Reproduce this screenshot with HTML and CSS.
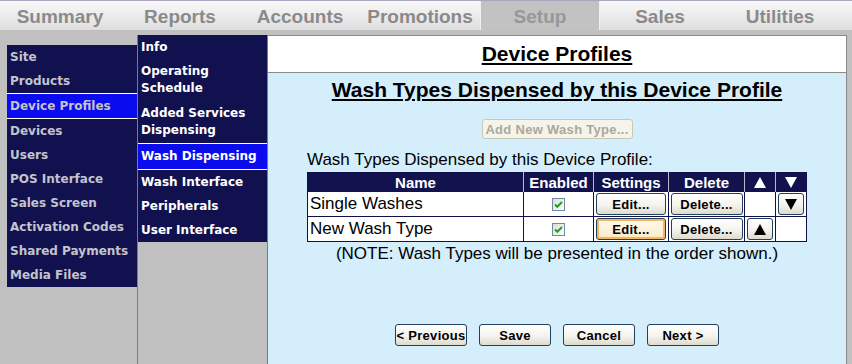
FILE: index.html
```html
<!DOCTYPE html>
<html lang="en">
<head>
    <meta charset="UTF-8">
    <title>Device Profiles - Setup</title>
    <link rel="stylesheet" href="styles.css">
</head>
<body>
    <div class="tabs">
        <div class="tab">Summary</div>
        <div class="tab">Reports</div>
        <div class="tab">Accounts</div>
        <div class="tab">Promotions</div>
        <div class="tab active">Setup</div>
        <div class="tab">Sales</div>
        <div class="tab">Utilities</div>
    </div>
    <div class="page">
        <div class="col-main">
            <ul class="nav nav-main">
                <li>Site</li>
                <li>Products</li>
                <li class="selected">Device Profiles</li>
                <li>Devices</li>
                <li>Users</li>
                <li>POS Interface</li>
                <li>Sales Screen</li>
                <li>Activation Codes</li>
                <li>Shared Payments</li>
                <li>Media Files</li>
            </ul>
        </div>
        <div class="col-sub">
            <ul class="nav nav-sub">
                <li>Info</li>
                <li class="two-line">Operating<br>Schedule</li>
                <li class="two-line">Added Services<br>Dispensing</li>
                <li class="selected">Wash Dispensing</li>
                <li>Wash Interface</li>
                <li>Peripherals</li>
                <li>User Interface</li>
            </ul>
        </div>
        <div class="content">
            <div class="content-head">
                <h1>Device Profiles</h1>
            </div>
            <div class="content-body">
                <h2>Wash Types Dispensed by this Device Profile</h2>
                <button class="xp add-btn" disabled>Add New Wash Type...</button>
                <div class="list">
                    <p class="list-label">Wash Types Dispensed by this Device Profile:</p>
                    <table>
                        <tr>
                            <th class="c-name">Name</th>
                            <th class="c-enabled">Enabled</th>
                            <th class="c-settings">Settings</th>
                            <th class="c-delete">Delete</th>
                            <th class="c-arrow"><svg width="12" height="11" viewBox="0 0 12 11"><polygon points="6,0 12,11 0,11" fill="#fff"/></svg></th>
                            <th class="c-arrow"><svg width="12" height="11" viewBox="0 0 12 11"><polygon points="0,0 12,0 6,11" fill="#fff"/></svg></th>
                        </tr>
                        <tr>
                            <td>Single Washes</td>
                            <td class="center"><span class="check"><svg width="11" height="11" viewBox="0 0 11 11"><path d="M2 5.5 L4.3 7.8 L9 3" stroke="#21a121" stroke-width="2" fill="none"/></svg></span></td>
                            <td class="center"><button class="xp edit-btn">Edit...</button></td>
                            <td class="center"><button class="xp del-btn">Delete...</button></td>
                            <td></td>
                            <td class="center"><button class="xp arrow-btn"><svg width="12" height="11" viewBox="0 0 12 11"><polygon points="0,0 12,0 6,11" fill="#000"/></svg></button></td>
                        </tr>
                        <tr>
                            <td>New Wash Type</td>
                            <td class="center"><span class="check"><svg width="11" height="11" viewBox="0 0 11 11"><path d="M2 5.5 L4.3 7.8 L9 3" stroke="#21a121" stroke-width="2" fill="none"/></svg></span></td>
                            <td class="center"><button class="xp edit-btn focus">Edit...</button></td>
                            <td class="center"><button class="xp del-btn">Delete...</button></td>
                            <td class="center"><button class="xp arrow-btn"><svg width="12" height="11" viewBox="0 0 12 11"><polygon points="6,0 12,11 0,11" fill="#000"/></svg></button></td>
                            <td></td>
                        </tr>
                    </table>
                </div>
                <p class="note">(NOTE: Wash Types will be presented in the order shown.)</p>
                <div class="wizard">
                    <button class="xp wiz-btn">&lt; Previous</button>
                    <button class="xp wiz-btn">Save</button>
                    <button class="xp wiz-btn">Cancel</button>
                    <button class="xp wiz-btn">Next &gt;</button>
                </div>
            </div>
        </div>
    </div>
</body>
</html>
```

FILE: styles.css
```css
* {
    box-sizing: border-box;
}
body {
    margin: 0;
    width: 852px;
    height: 364px;
    overflow: hidden;
    background-color: #c0c0c0;
    font-family: "Liberation Sans", Arial, sans-serif;
}
.tabs {
    display: flex;
    height: 30px;
    background: linear-gradient(#f9f9f9, #dedede);
    border-top: 1px solid #aaa6c2;
}
.tab {
    width: 120px;
    padding-top: 2px;
    text-align: center;
    font-weight: bold;
    font-size: 19px;
    line-height: 27px;
    color: #8a8a8a;
}
.tab.active {
    background-color: #c2c2c2;
    border-left: 1px solid #f0f0f0;
    border-right: 1px solid #f0f0f0;
    color: #979797;
}
.page {
    display: flex;
    height: 334px;
    padding-top: 5px;
}
.col-main {
    width: 138px;
    padding: 10px 0 0 7px;
    border-right: 1px solid #7c7c7c;
}
.col-sub {
    width: 130px;
    border-right: 1px solid #7c7c7c;
}
.nav {
    list-style: none;
    margin: 0;
    padding: 0;
    background-color: #111150;
    font-family: "DejaVu Sans", Verdana, sans-serif;
    font-weight: bold;
    font-size: 12px;
    white-space: nowrap;
}
.nav-main li {
    line-height: 24px;
    padding-left: 3px;
    color: #c4c4cc;
}
.nav-sub li {
    line-height: 17px;
    padding: 4px 3px 3px 3px;
    color: #fff;
}
.nav-sub li.two-line,
.nav-sub li.selected {
    padding-bottom: 4px;
}
.nav li.selected {
    background-color: #0b0bef;
    border-top: 1px solid #fff;
    border-bottom: 1px solid #fff;
}
.content {
    flex: 1;
    margin-right: 5px;
    border-top: 1px solid #8a8a8a;
    border-right: 1px solid #8a8a8a;
    background-color: #d5eefc;
}
.content-head {
    background-color: #fff;
    height: 37px;
    border-bottom: 1px solid #8a8a8a;
}
h1 {
    margin: 0;
    font-size: 21px;
    line-height: 36px;
    text-align: center;
    text-decoration: underline;
}
.content-body {
    padding-top: 5px;
    text-align: center;
}
h2 {
    margin: 0;
    font-size: 21px;
    line-height: 24px;
    text-decoration: underline;
}
.xp {
    font-family: "Liberation Sans", Arial, sans-serif;
    font-weight: bold;
    font-size: 13px;
    letter-spacing: 0.3px;
    color: #000;
    background: linear-gradient(#ffffff, #f4f3ee 55%, #dedbcd);
    border: 1px solid #233f5e;
    border-radius: 3px;
    padding: 0;
    height: 22px;
}
.add-btn {
    display: block;
    margin: 17px auto 0;
    width: 151px;
    height: 20px;
    color: #aca899;
    background: #f5f4ea;
    border-color: #c9c7ba;
}
.list {
    width: 500px;
    margin: 11px auto 0;
    text-align: left;
}
.list-label {
    margin: 0 0 2px;
    font-size: 17px;
    line-height: 20px;
}
table {
    width: 500px;
    border-collapse: collapse;
    border: 1px solid #10104a;
}
th {
    background-color: #12124e;
    color: #fff;
    font-size: 15px;
    height: 19px;
    padding: 0;
    text-align: center;
    border-left: 1px solid #b8b8cc;
    line-height: 17px;
}
th:first-child {
    border-left: none;
}
th svg {
    display: block;
    margin: 0 auto;
}
td {
    background-color: #fff;
    border: 1px solid #10104a;
    height: 25px;
    font-size: 17px;
    padding: 0 2px;
}
td.center {
    text-align: center;
    padding: 0;
}
.c-name { width: 216px; }
.c-enabled { width: 70px; }
.c-settings { width: 75px; }
.c-delete { width: 76px; }
.c-arrow { width: 31px; }
.check {
    display: inline-block;
    width: 13px;
    height: 13px;
    border: 1px solid #6f8aa4;
    background: linear-gradient(135deg, #dcdcd4, #ffffff);
    vertical-align: middle;
}
.check svg {
    display: block;
}
.edit-btn {
    width: 70px;
    vertical-align: middle;
}
.edit-btn.focus {
    background: linear-gradient(#fffaf0, #fbe9c6);
    box-shadow: inset 0 0 0 2px #f1b660;
}
.del-btn {
    width: 72px;
    vertical-align: middle;
}
.arrow-btn {
    width: 26px;
    vertical-align: middle;
}
.arrow-btn svg {
    display: block;
    margin: 0 auto;
}
.note {
    margin: 2px 0 0;
    font-size: 17px;
    line-height: 20px;
}
.wizard {
    display: flex;
    justify-content: center;
    gap: 12px;
    margin-top: 60px;
}
.wiz-btn {
    width: 72px;
}
```
